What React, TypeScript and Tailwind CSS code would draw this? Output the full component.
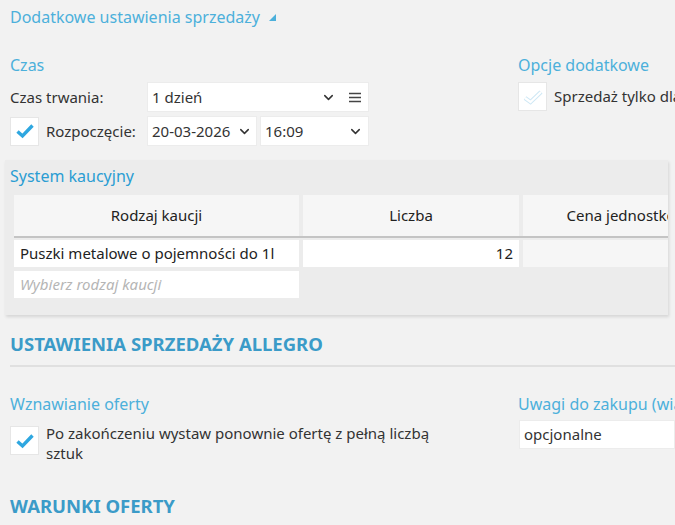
import { ChevronDown } from "lucide-react";

const font = { fontFamily: '"Segoe UI", "Noto Sans", "Open Sans", sans-serif' };

const Check = ({ faint = false }: { faint?: boolean }) => (
  <div className="w-[29px] h-[29px] bg-white border border-[#e6e6e6] flex items-center justify-center shrink-0">
    {faint ? (
      <svg width="22" height="17" viewBox="0 0 22 17">
        <polyline points="3,10 8.5,14 19,4" fill="none" stroke="#cfe8f5" strokeWidth="4.4" />
        <polyline points="3,10 8.5,14 19,4" fill="none" stroke="#ffffff" strokeWidth="2.2" />
      </svg>
    ) : (
      <svg width="20" height="16" viewBox="0 0 20 16">
        <polyline points="2.5,8.5 7.5,13 17.5,2.5" fill="none" stroke="#2ea7e0" strokeWidth="3.4" />
      </svg>
    )}
  </div>
);

const Chev = () => <ChevronDown size={15} strokeWidth={2.4} className="text-[#333]" />;

export default function App() {
  return (
    <div style={font} className="w-[675px] h-[525px] overflow-hidden bg-[#f2f2f2] text-[#333] text-[15px]">
      <div className="pl-[10px] pt-[6px] flex items-center gap-[8px]">
        <span className="text-[16px] leading-[22px] text-[#4cb0db]">Dodatkowe ustawienia sprzedaży</span>
        <svg width="8" height="8" viewBox="0 0 8 8" className="mt-[2px]">
          <polygon points="8,0 8,7 1,7" fill="#4cb0db" />
        </svg>
      </div>

      <div className="grid grid-cols-[518px_1fr] mt-[26px]">
        <div className="pl-[10px]">
          <div className="text-[16px] leading-[22px] text-[#4cb0db]">Czas</div>
          <div className="mt-[6px] flex items-center">
            <span className="w-[137px] leading-[20px]">Czas trwania:</span>
            <div className="w-[222px] h-[30px] bg-white border border-[#ececec] flex items-center">
              <span className="flex-1 pl-[4px]">1 dzień</span>
              <div className="w-[28px] flex justify-center"><Chev /></div>
              <div className="w-[26px] flex justify-center">
                <svg width="12" height="11" viewBox="0 0 12 11">
                  <path d="M0 1.5h12M0 5.5h12M0 9.5h12" stroke="#444" strokeWidth="1.4" />
                </svg>
              </div>
            </div>
          </div>
          <div className="mt-[4px] flex items-center">
            <Check />
            <span className="ml-[7px] w-[101px]">Rozpoczęcie:</span>
            <div className="w-[110px] h-[30px] bg-white border border-[#ececec] flex items-center overflow-hidden">
              <span className="pl-[4px] whitespace-nowrap w-[84px] overflow-hidden">20-03-2026</span>
              <div className="flex-1 flex justify-center"><Chev /></div>
            </div>
            <div className="ml-[3px] w-[109px] h-[30px] bg-white border border-[#ececec] flex items-center">
              <span className="flex-1 pl-[4px]">16:09</span>
              <div className="w-[26px] flex justify-center"><Chev /></div>
            </div>
          </div>
        </div>
        <div className="whitespace-nowrap overflow-hidden">
          <div className="text-[16px] leading-[22px] text-[#4cb0db]">Opcje dodatkowe</div>
          <div className="mt-[6px] flex items-center">
            <Check faint />
            <span className="ml-[7px]">Sprzedaż tylko dla firm</span>
          </div>
        </div>
      </div>

      <div className="mt-[14px] ml-[5px] w-[663px] h-[155px] bg-[#ececec] shadow-[1px_2px_3px_rgba(0,0,0,0.12)] overflow-hidden">
        <div className="pl-[5px] pt-[5px] text-[16px] leading-[22px] text-[#2a9dd3]">System kaucyjny</div>
        <div className="ml-[9px] mt-[8px] w-[730px]">
          <div className="flex gap-[4px] border-b-2 border-[#c4c4c4]">
            <div className="w-[285px] h-[41px] bg-[#f6f6f6] flex items-center justify-center text-[#222]">Rodzaj kaucji</div>
            <div className="w-[216px] h-[41px] bg-[#f6f6f6] flex items-center justify-center text-[#222]">Liczba</div>
            <div className="w-[216px] h-[41px] bg-[#f6f6f6] flex items-center justify-center text-[#222]">Cena jednostkowa</div>
          </div>
          <div className="flex gap-[4px] mt-[2px]">
            <div className="w-[285px] h-[27px] bg-white flex items-center pl-[6px] text-[#222]">Puszki metalowe o pojemności do 1l</div>
            <div className="w-[216px] h-[27px] bg-white flex items-center justify-end pr-[6px] text-[#222]">12</div>
            <div className="w-[216px] h-[27px] bg-[#f6f6f6]" />
          </div>
          <div className="mt-[4px] w-[285px] h-[27px] bg-white flex items-center pl-[6px] italic text-[#b5b5b5]">Wybierz rodzaj kaucji</div>
        </div>
      </div>

      <div className="ml-[10px] mt-[17px] text-[18.5px] leading-[24px] font-bold text-[#3b9bc8]">USTAWIENIA SPRZEDAŻY ALLEGRO</div>
      <div className="ml-[10px] mt-[9px] h-[2px] bg-[#e0e0e0]" />

      <div className="grid grid-cols-[518px_1fr] mt-[26px]">
        <div className="pl-[10px]">
          <div className="text-[16px] leading-[22px] text-[#4cb0db]">Wznawianie oferty</div>
          <div className="mt-[11px] flex items-start">
            <Check />
            <span className="ml-[7px] w-[400px] leading-[20px] -mt-[3px]">Po zakończeniu wystaw ponownie ofertę z pełną liczbą sztuk</span>
          </div>
        </div>
        <div className="whitespace-nowrap overflow-hidden">
          <div className="text-[16px] leading-[22px] text-[#4cb0db]">Uwagi do zakupu (wiadomość do sprzedającego)</div>
          <div className="mt-[5px] ml-[1px] h-[29px] bg-white border border-[#ececec] flex items-center pl-[4px]">opcjonalne</div>
        </div>
      </div>

      <div className="ml-[10px] mt-[31px] text-[18.5px] leading-[24px] font-bold text-[#3b9bc8]">WARUNKI OFERTY</div>
    </div>
  );
}
